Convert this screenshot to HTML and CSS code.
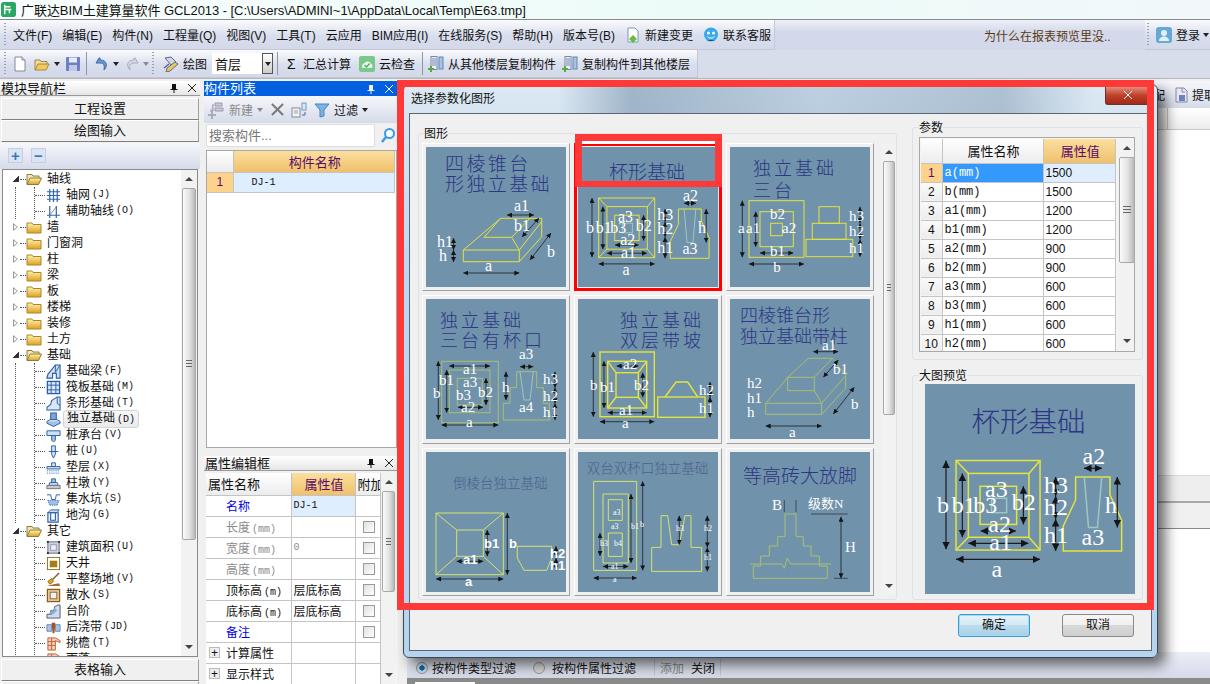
FILE: index.html
```html
<!DOCTYPE html>
<html>
<head>
  <title>广联达BIM土建算量软件 GCL2013</title>
  <link rel="stylesheet" href="styles.css">
</head>
<body>
<svg class="sprite">
  <defs>
    <linearGradient id="fy" x1="0" y1="0" x2="0" y2="1"><stop offset="0" stop-color="#fff3b0"/><stop offset="1" stop-color="#e0a020"/></linearGradient>
    <marker id="ah" viewBox="0 0 6 6" refX="6" refY="3" markerWidth="5" markerHeight="5" orient="auto-start-reverse" markerUnits="userSpaceOnUse"><path d="M0 0L6 3L0 6z" fill="#151515"/></marker>
    <symbol id="i-folder" viewBox="0 0 16 16"><path d="M1 4h5l1 1.500h8V14H1z" fill="url(#fy)" stroke="#a8882c"/></symbol>
    <symbol id="i-folder-open" viewBox="0 0 16 16"><path d="M1 13V3.500h5l1 1.500h6v2" fill="#f8e8a8" stroke="#8a7a40"/><path d="M1 13.500L4 7h11.500l-3 6.500z" fill="url(#fy)" stroke="#8a7a40"/></symbol>
    <symbol id="i-grid" viewBox="0 0 16 16"><path d="M1 4h14M1 8h14M1 12h14M4 1v14M8 1v14M12 1v14" stroke="#2f66b4" stroke-width="1.300" fill="none"/></symbol>
    <symbol id="i-aux" viewBox="0 0 16 16"><path d="M1 12h14M4 2v13M11 2v13" stroke="#2f66b4" stroke-width="1.300" fill="none"/><path d="M4 12L11 3" stroke="#888" fill="none"/></symbol>
    <symbol id="i-beam" viewBox="0 0 16 16"><path d="M1 15l1-4 8-10h5v14h-4v-5H7v5z" fill="#cfe0f4" stroke="#2a5ea8" stroke-width="1.200"/><path d="M10 1v8M15 1l-5 8" stroke="#2a5ea8"/></symbol>
    <symbol id="i-raft" viewBox="0 0 16 16"><rect x="1.500" y="1.500" width="13" height="13" fill="#dbe8f6" stroke="#2a5ea8" stroke-width="1.400"/><path d="M5.500 1.500v13M10.500 1.500v13M1.500 5.500h13M1.500 10.500h13" stroke="#2a5ea8"/></symbol>
    <symbol id="i-strip" viewBox="0 0 16 16"><path d="M1 15v-3l4-3 1-4 6-4h3v14z" fill="#d9e6f5" stroke="#2a5ea8" stroke-width="1.100"/><path d="M12 1v7l3 2" stroke="#2a5ea8" fill="none"/></symbol>
    <symbol id="i-pad" viewBox="0 0 16 16"><path d="M1 10l7-4 7 4-7 5z" fill="#cfe0f4" stroke="#2a5ea8"/><path d="M1 10v2l7 3.500 7-3.500v-2" fill="#9fc0e4" stroke="#2a5ea8"/><rect x="5" y="1" width="6" height="7" fill="#7fa4d0" stroke="#2a5ea8"/></symbol>
    <symbol id="i-cap" viewBox="0 0 16 16"><path d="M1 3h14v5H1z" fill="#cfe0f4" stroke="#2a5ea8"/><path d="M6 8h4v5l-2 2-2-2z" fill="#9fc0e4" stroke="#2a5ea8"/></symbol>
    <symbol id="i-pile" viewBox="0 0 16 16"><path d="M6 2h4v9l-2 4-2-4z" fill="#cfe0f4" stroke="#2a5ea8"/><path d="M3 8h10" stroke="#2a5ea8"/></symbol>
    <symbol id="i-cushion" viewBox="0 0 16 16"><path d="M6 3h4v4H6zM1 7h14v2.500H1z" fill="#d8e4f2" stroke="#2a5ea8"/><path d="M1 11.500h14M1 14h14" stroke="#2a5ea8" stroke-dasharray="1 1"/></symbol>
    <symbol id="i-pier" viewBox="0 0 16 16"><path d="M6 3h4v4H6z" fill="#9fc0e4" stroke="#2a5ea8"/><path d="M4 7h8l1 3H3z" fill="#cfe0f4" stroke="#2a5ea8"/><rect x="1" y="10" width="14" height="3.500" fill="#c8c8c8" stroke="#777"/></symbol>
    <symbol id="i-pit" viewBox="0 0 16 16"><path d="M1 3h4l1 5h4l1-5h4" fill="none" stroke="#2a5ea8"/><path d="M2 9h12l-2 5H4z" fill="#9fc0e4" stroke="#2a5ea8" stroke-dasharray="1 1"/></symbol>
    <symbol id="i-ditch" viewBox="0 0 16 16"><path d="M2 5l3-3h9l-2 3z" fill="#cfe0f4" stroke="#2a5ea8"/><path d="M2 5h11v10H2zM5 5v8h5V5" fill="#e4eef8" stroke="#2a5ea8" stroke-width="1.200"/></symbol>
    <symbol id="i-area" viewBox="0 0 16 16"><rect x="2" y="2" width="12" height="12" fill="#c8d4e4" stroke="#667"/><rect x="5" y="5" width="6" height="6" fill="#eef" stroke="#99a"/><path d="M1 1h2v2H1zM13 1h2v2h-2zM1 13h2v2H1zM13 13h2v2h-2z" fill="#222"/></symbol>
    <symbol id="i-well" viewBox="0 0 16 16"><rect x="1.500" y="1.500" width="13" height="13" fill="#fff" stroke="#8a6a20"/><rect x="4" y="5" width="8" height="7" fill="#a87c10"/></symbol>
    <symbol id="i-level" viewBox="0 0 16 16"><path d="M14 1L7 8" stroke="#8a5a20" stroke-width="1.500"/><path d="M2 10l4-3 2 3-4 3z" fill="#e0a820" stroke="#8a6a10"/><path d="M1 15h14l-1-3-6 1z" fill="#a86838"/></symbol>
    <symbol id="i-apron" viewBox="0 0 16 16"><rect x="1.500" y="1.500" width="13" height="13" fill="#e8c898" stroke="#8a5a20" stroke-width="1.300"/><rect x="4.500" y="4.500" width="7" height="7" fill="#eef2f8" stroke="#8a6a30"/></symbol>
    <symbol id="i-step" viewBox="0 0 16 16"><path d="M1 15v-4h4V7h4V3l4-2h2v14z" fill="#cfdcee" stroke="#556"/><path d="M3 10l6-6 3 3-6 5z" fill="#8aa8d0"/></symbol>
    <symbol id="i-belt" viewBox="0 0 16 16"><path d="M1 5h5v7H1zM10 5h5v7h-5z" fill="#a8c4e4" stroke="#6688b0"/><path d="M6 3h4l-1 11H7z" fill="#a85020"/></symbol>
    <symbol id="i-eave" viewBox="0 0 16 16"><path d="M2 2h8l5 3v2l-5-2v10H2z" fill="#f4d0b8" stroke="#c06030"/><path d="M2 6h8M2 10h8M6 2v13" stroke="#c06030"/></symbol>
    <symbol id="i-doc" viewBox="0 0 16 16"><path d="M3 1h7l3 3v11H3z" fill="#fff" stroke="#889"/><path d="M10 1v3h3" fill="#dde" stroke="#889"/></symbol>
    <symbol id="i-open" viewBox="0 0 16 16"><path d="M1 14V4h5l1 1.500h6V8" fill="#f0dca0" stroke="#a08840"/><path d="M1 14l3-6h11l-3 6z" fill="#f4c860" stroke="#a08840"/></symbol>
    <symbol id="i-save" viewBox="0 0 16 16"><rect x="1" y="1" width="14" height="14" rx="1" fill="#6f7fc4"/><rect x="4" y="1.500" width="8" height="5" fill="#e8ecf8"/><rect x="4" y="9" width="8" height="6" fill="#c0c8e8"/></symbol>
    <symbol id="i-undo" viewBox="0 0 16 16"><path d="M5 2L2 7h4c3 0 5 1 4 7 4-4 3-10-4-10V2z" fill="#6a9ad4" stroke="#3a6aa4"/></symbol>
    <symbol id="i-redo" viewBox="0 0 16 16"><path d="M11 2l3 5h-4c-3 0-5 1-4 7-4-4-3-10 4-10V2z" fill="#d4dae4" stroke="#aab"/></symbol>
    <symbol id="i-draw" viewBox="0 0 16 16"><path d="M2 2l6-1 5 5-4 4z" fill="#cfd8e8" stroke="#667"/><path d="M12 6l3 2-8 7-4 1 1-4z" fill="#e8c860" stroke="#667"/><path d="M1 12l5-4" stroke="#46a" stroke-width="1.500"/></symbol>
    <symbol id="i-cloud" viewBox="0 0 16 16"><rect width="16" height="16" rx="2" fill="#7cc88a"/><path d="M3 10c0-2 2-3 3-3 1-2 5-2 6 1 2 0 2 4 0 4H5c-1 0-2 0-2-2z" fill="#e8f8ea"/><path d="M5.500 9l2 2 3-3.500" stroke="#4aa860" stroke-width="1.300" fill="none"/></symbol>
    <symbol id="i-copy" viewBox="0 0 16 16"><rect x="3" y="0.500" width="6" height="13" fill="#e8eef8" stroke="#78a"/><path d="M4 3h4M4 5h4M4 7h4M4 9h4" stroke="#78a"/><rect x="11" y="1" width="4" height="12" fill="#a8c4e4" stroke="#68a"/><path d="M2 10h2v2h2v2H4v2H2v-2H0v-2h2z" fill="#58a848"/></symbol>
    <symbol id="i-change" viewBox="0 0 16 16"><path d="M3 1h7l3 3v11H3z" fill="#fff" stroke="#79b"/><path d="M8 8l4 4-4 4-4-4z" fill="#6cb840"/></symbol>
    <symbol id="i-smile" viewBox="0 0 16 16"><circle cx="8" cy="7.500" r="7" fill="#3ca8ec"/><circle cx="5.500" cy="6" r="1.500" fill="#fff"/><circle cx="10.500" cy="6" r="1.500" fill="#fff"/><path d="M4.500 9.500c1.500 2 5.500 2 7 0" stroke="#fff" fill="none"/><path d="M4 14l2-1h4l2 1" stroke="#3ca8ec"/></symbol>
    <symbol id="i-user" viewBox="0 0 16 16"><rect width="16" height="16" rx="3" fill="#68a8d4"/><circle cx="8" cy="6" r="3" fill="#e4f0f8"/><path d="M3 14c0-6 10-6 10 0z" fill="#e4f0f8"/></symbol>
    <symbol id="i-pin" viewBox="0 0 10 10"><path d="M3 1h4v5h1.500v1h-3v3h-1V7h-3V6H3z" fill="#111"/></symbol>
    <symbol id="i-close" viewBox="0 0 10 10"><path d="M1 1l8 8M9 1l-8 8" stroke="#222" fill="none"/></symbol>
    <symbol id="i-close-w" viewBox="0 0 10 10"><path d="M1 1l8 8M9 1l-8 8" stroke="#fff" fill="none"/></symbol>
    <symbol id="i-new" viewBox="0 0 18 18"><path d="M7 2h7v3H7zM7 7h8v3H7zM5 3v7H2" fill="#ccd" stroke="#99a"/><path d="M3 10h2v3h3v2H5v3H3v-3H0v-2h3z" fill="#aab"/></symbol>
    <symbol id="i-del" viewBox="0 0 14 14"><path d="M1 1l12 12M13 1L1 13" stroke="#7a7a7a" stroke-width="2.200" fill="none"/></symbol>
    <symbol id="i-dup" viewBox="0 0 16 16"><rect x="1" y="6" width="8" height="9" fill="#f4f4f4" stroke="#889"/><path d="M3 9h4M3 11h4" stroke="#99a"/><rect x="11" y="1" width="4" height="7" fill="#d8e8f8" stroke="#79b"/><path d="M11 13h3v-3" stroke="#46a" fill="none"/></symbol>
    <symbol id="i-filter" viewBox="0 0 16 16"><path d="M1 2h14L10 8v6l-4 1V8z" fill="#7ab4e4" stroke="#4a84b4"/></symbol>
    <symbol id="i-search" viewBox="0 0 16 16"><circle cx="9.500" cy="6.500" r="4.500" fill="#fff" stroke="#3a9ae8" stroke-width="2"/><path d="M6 10l-4 5" stroke="#3a9ae8" stroke-width="2.500"/></symbol>
    <symbol id="i-extract" viewBox="0 0 16 16"><path d="M3 1h8l3 3v11H3z" fill="#e8e8f4" stroke="#889"/><rect x="6" y="8" width="6" height="6" fill="#6f7fc4"/><path d="M9 1v4h3" stroke="#889" fill="none"/></symbol>

    <symbol id="cup" viewBox="0 0 140 140">
      <text class="tt" x="31" y="32" font-size="19">杯形基础</text>
      <g class="ln-y">
        <rect x="20.700" y="51" width="56" height="59.700"/>
        <rect x="28.900" y="59.600" width="40.400" height="42.600"/>
        <rect x="36.700" y="68.200" width="24.400" height="25.400"/>
        <path d="M20.700 51l8.200 8.600M76.700 51l-7.400 8.600M20.700 110.700l8.200-8.500M76.700 110.700l-7.400-8.500"/>
        <path d="M100.400 62h22.900v11.900l7.800 16.800v20.600H92.200V94.700l8.200-17.400z"/>
      </g>
      <g class="ln-p">
        <rect x="44.400" y="76.200" width="10" height="9.600"/>
        <path d="M106.200 62l2.800 33.600h6l2.800-33.600"/>
      </g>
      <g class="dim" marker-start="url(#ah)" marker-end="url(#ah)">
        <path d="M14 51V110.200"/><path d="M24.900 59.600V102.200"/><path d="M65.600 68.200V93.600"/>
        <path d="M20.700 116.900H76.700"/><path d="M28.900 106.200H68.900"/><path d="M37 98H60.700"/>
        <path d="M106 56.200H118"/><path d="M87.100 62V74.700"/><path d="M87.100 74.700V90"/><path d="M87.100 90V111.300"/><path d="M128.200 62V95.600"/>
      </g>
      <g class="lb" font-size="16">
        <text x="8" y="85.800">b</text><text x="17.800" y="85.800">b1</text><text x="32.200" y="85.800">b3</text><text x="57.800" y="84">b2</text>
        <text x="40" y="75">a3</text><text x="42.200" y="98.400">a2</text><text x="42.900" y="110.700">a1</text><text x="44.400" y="128.400">a</text>
        <text x="105" y="53.600">a2</text><text x="79.300" y="72.900">h3</text><text x="79.300" y="87">h2</text><text x="79.300" y="106.200">h1</text>
        <text x="120" y="85.800">h</text><text x="104.400" y="107.300">a3</text>
      </g>
    </symbol>
  </defs>
</svg>

<div class="app">
  <div class="titlebar">
    <svg class="app-logo" viewBox="0 0 16 16"><rect width="16" height="16" rx="3" fill="#28a860"/><path d="M4 3v10M4 5h6M4 8h7M9 8v4" stroke="#fff" stroke-width="1.500" fill="none"/></svg>
    <span>广联达BIM土建算量软件 GCL2013 - [C:\Users\ADMINI~1\AppData\Local\Temp\E63.tmp]</span>
  </div>

  <div class="menubar">
    <div class="bar-seg menu-seg">
      <span class="grip"></span>
      <span>文件(F)</span><span>编辑(E)</span><span>构件(N)</span><span>工程量(Q)</span><span>视图(V)</span><span>工具(T)</span><span>云应用</span><span>BIM应用(I)</span><span>在线服务(S)</span><span>帮助(H)</span><span>版本号(B)</span>
      <span class="tool"><svg class="ic"><use href="#i-change"/></svg>新建变更</span>
      <span class="tool"><svg class="ic"><use href="#i-smile"/></svg>联系客服</span>
    </div>
    <div class="news">为什么在报表预览里没..</div>
    <div class="bar-seg login-seg">
      <span class="grip"></span>
      <span class="tool"><svg class="ic"><use href="#i-user"/></svg>登录</span><span class="caret"></span>
    </div>
  </div>

  <div class="toolbar">
    <div class="bar-seg tool-seg">
      <span class="grip"></span>
      <svg class="ic ml-6"><use href="#i-doc"/></svg>
      <svg class="ic ml-6"><use href="#i-open"/></svg><span class="caret"></span>
      <svg class="ic ml-5"><use href="#i-save"/></svg>
      <span class="sep ml-5"></span>
      <svg class="ic ml-7"><use href="#i-undo"/></svg><span class="caret ml-3"></span>
      <svg class="ic ml-5"><use href="#i-redo"/></svg><span class="caret ml-3 faded"></span>
      <span class="grip ml-3"></span>
      <span class="tool ml-9"><svg class="ic"><use href="#i-draw"/></svg>绘图</span>
      <span class="floor"><span>首层</span><b class="floor-btn"><i class="caret"></i></b></span>
      <span class="sep ml-4"></span>
      <span class="tool sigma ml-9"><b>Σ</b>汇总计算</span>
      <span class="tool ml-8"><svg class="ic"><use href="#i-cloud"/></svg>云检查</span>
      <span class="sep ml-7"></span>
      <span class="tool ml-5"><svg class="ic"><use href="#i-copy"/></svg>从其他楼层复制构件</span>
      <span class="tool ml-6"><svg class="ic"><use href="#i-copy"/></svg>复制构件到其他楼层</span>
    </div>
  </div>

  <div class="main">
    <div class="nav">
      <div class="pane-head"><span>模块导航栏</span><svg class="pin"><use href="#i-pin"/></svg><svg class="x"><use href="#i-close"/></svg></div>
      <div class="nav-btn first">工程设置</div>
      <div class="nav-btn">绘图输入</div>
      <div class="expander"><span class="ex-btn">+</span><span class="ex-btn">−</span></div>
      <div class="tree-box">
        <div class="tree">
          <div class="tree-row"><i class="exp open"></i><svg class="folder"><use href="#i-folder-open"/></svg>轴线</div>
          <div class="kids">
            <div class="tree-row kid"><svg class="ti"><use href="#i-grid"/></svg>轴网<span class="key">(J)</span></div>
            <div class="tree-row kid"><svg class="ti"><use href="#i-aux"/></svg>辅助轴线<span class="key">(O)</span></div>
          </div>
          <div class="tree-row"><i class="exp"></i><svg class="folder"><use href="#i-folder"/></svg>墙</div>
          <div class="tree-row"><i class="exp"></i><svg class="folder"><use href="#i-folder"/></svg>门窗洞</div>
          <div class="tree-row"><i class="exp"></i><svg class="folder"><use href="#i-folder"/></svg>柱</div>
          <div class="tree-row"><i class="exp"></i><svg class="folder"><use href="#i-folder"/></svg>梁</div>
          <div class="tree-row"><i class="exp"></i><svg class="folder"><use href="#i-folder"/></svg>板</div>
          <div class="tree-row"><i class="exp"></i><svg class="folder"><use href="#i-folder"/></svg>楼梯</div>
          <div class="tree-row"><i class="exp"></i><svg class="folder"><use href="#i-folder"/></svg>装修</div>
          <div class="tree-row"><i class="exp"></i><svg class="folder"><use href="#i-folder"/></svg>土方</div>
          <div class="tree-row"><i class="exp open"></i><svg class="folder"><use href="#i-folder-open"/></svg>基础</div>
          <div class="kids">
            <div class="tree-row kid"><svg class="ti"><use href="#i-beam"/></svg>基础梁<span class="key">(F)</span></div>
            <div class="tree-row kid"><svg class="ti"><use href="#i-raft"/></svg>筏板基础<span class="key">(M)</span></div>
            <div class="tree-row kid"><svg class="ti"><use href="#i-strip"/></svg>条形基础<span class="key">(T)</span></div>
            <div class="tree-row kid current"><svg class="ti"><use href="#i-pad"/></svg><em>独立基础<span class="key">(D)</span></em></div>
            <div class="tree-row kid"><svg class="ti"><use href="#i-cap"/></svg>桩承台<span class="key">(V)</span></div>
            <div class="tree-row kid"><svg class="ti"><use href="#i-pile"/></svg>桩<span class="key">(U)</span></div>
            <div class="tree-row kid"><svg class="ti"><use href="#i-cushion"/></svg>垫层<span class="key">(X)</span></div>
            <div class="tree-row kid"><svg class="ti"><use href="#i-pier"/></svg>柱墩<span class="key">(Y)</span></div>
            <div class="tree-row kid"><svg class="ti"><use href="#i-pit"/></svg>集水坑<span class="key">(S)</span></div>
            <div class="tree-row kid"><svg class="ti"><use href="#i-ditch"/></svg>地沟<span class="key">(G)</span></div>
          </div>
          <div class="tree-row"><i class="exp open"></i><svg class="folder"><use href="#i-folder-open"/></svg>其它</div>
          <div class="kids">
            <div class="tree-row kid"><svg class="ti"><use href="#i-area"/></svg>建筑面积<span class="key">(U)</span></div>
            <div class="tree-row kid"><svg class="ti"><use href="#i-well"/></svg>天井</div>
            <div class="tree-row kid"><svg class="ti"><use href="#i-level"/></svg>平整场地<span class="key">(V)</span></div>
            <div class="tree-row kid"><svg class="ti"><use href="#i-apron"/></svg>散水<span class="key">(S)</span></div>
            <div class="tree-row kid"><svg class="ti"><use href="#i-step"/></svg>台阶</div>
            <div class="tree-row kid"><svg class="ti"><use href="#i-belt"/></svg>后浇带<span class="key">(JD)</span></div>
            <div class="tree-row kid"><svg class="ti"><use href="#i-eave"/></svg>挑檐<span class="key">(T)</span></div>
            <div class="tree-row kid"><svg class="ti"><use href="#i-eave"/></svg>雨蓬</div>
          </div>
        </div>
        <div class="sb sb-tree"><i class="up"></i><div class="thumb"></div><i class="down"></i></div>
      </div>
      <div class="nav-btn foot">表格输入</div>
      <div class="nav-btn"></div>
    </div>

    <div class="list">
      <div class="pane-head active"><span>构件列表</span><svg class="pin"><use href="#i-pin"/></svg><svg class="x"><use href="#i-close-w"/></svg></div>
      <div class="list-tools">
        <svg class="new"><use href="#i-new"/></svg><span class="dim-text">新建</span><span class="caret faded"></span>
        <svg class="del"><use href="#i-del"/></svg>
        <svg class="ic"><use href="#i-dup"/></svg>
        <svg class="ic"><use href="#i-filter"/></svg><span>过滤</span><span class="caret"></span>
      </div>
      <div class="search"><span class="search-box">搜索构件...</span><svg class="ic"><use href="#i-search"/></svg></div>
      <div class="list-grid">
        <table class="grid">
          <tr><th class="rh"></th><th class="hot">构件名称</th></tr>
          <tr><td class="rh hot-rh">1</td><td class="val mono indent">DJ-1</td></tr>
        </table>
      </div>
      <div class="pane-head"><span>属性编辑框</span><svg class="pin"><use href="#i-pin"/></svg><svg class="x"><use href="#i-close"/></svg></div>
      <div class="prop-box">
        <table class="grid prop">
          <tr><th class="plain">属性名称</th><th class="hot">属性值</th><th class="plain">附加</th></tr>
          <tr><td class="blue pi">名称</td><td class="val mono">DJ-1</td><td></td></tr>
          <tr><td class="gray pi">长度<span class="key">(mm)</span></td><td></td><td><i class="chk"></i></td></tr>
          <tr><td class="gray pi">宽度<span class="key">(mm)</span></td><td class="gray mono">0</td><td><i class="chk"></i></td></tr>
          <tr><td class="gray pi">高度<span class="key">(mm)</span></td><td></td><td><i class="chk"></i></td></tr>
          <tr><td class="pi">顶标高<span class="key">(m)</span></td><td>层底标高</td><td><i class="chk"></i></td></tr>
          <tr><td class="pi">底标高<span class="key">(m)</span></td><td>层底标高</td><td><i class="chk"></i></td></tr>
          <tr><td class="blue pi">备注</td><td></td><td><i class="chk"></i></td></tr>
          <tr><td class="pi"><i class="plus">+</i>计算属性</td><td></td><td></td></tr>
          <tr><td class="pi"><i class="plus">+</i>显示样式</td><td></td><td></td></tr>
        </table>
        <div class="sb sb-prop"><i class="up"></i><div class="thumb"></div><i class="down"></i></div>
      </div>
    </div>

    <div class="work">
      <div class="work-tools"><span>配</span><svg class="ic"><use href="#i-extract"/></svg><span>提取</span></div>
      <div class="work-head"><span class="work-cell"></span></div>
      <div class="work-blank"></div>
      <div class="work-band"></div>
      <div class="work-band light"></div>
      <div class="work-blank short"></div>
      <div class="filter-bar">
        <span class="filter-seg">
          <i class="radio on"></i><span>按构件类型过滤</span>
          <i class="radio second"></i><span>按构件属性过滤</span>
        </span>
        <span class="filter-seg"><span class="dim-text">添加</span><span>关闭</span></span>
      </div>
      <div class="tabs"><span class="tab"></span></div>
    </div>
  </div>

  <div class="dialog">
    <div class="dlg-title"><span>选择参数化图形</span><span class="dlg-close"><svg><use href="#i-close-w"/></svg></span></div>
    <div class="dlg-client">
      <div class="dlg-body">
        <div class="group g-shapes">
          <div class="legend">图形</div>
          <div class="shapes">
            <div class="cells">
              <div class="cell">
                <svg class="thumb-img" viewBox="0 0 140 140">
                  <g class="tt" font-size="19" letter-spacing="2.400"><text x="19" y="24">四棱锥台</text><text x="19" y="44">形独立基础</text></g>
                  <path class="ln-y" d="M37.300 103H93.300V114.700H37.300zM37.300 103L74.700 71.300H115.700V89.700L93.300 114.700M93.300 103L115.700 74.700M58 90.300H85.700M58 90.300L74.700 71.300M85.700 90.300L104 71.300M85.700 90.300L93.300 103"/>
                  <g class="dim" marker-start="url(#ah)" marker-end="url(#ah)">
                    <path d="M81 68H108"/><path d="M113 71L96 90"/><path d="M125 86L104 113"/><path d="M37.300 126H93.300"/><path d="M27.500 91V103"/><path d="M27.500 103V115"/>
                  </g>
                  <g class="lb" font-size="16"><text x="88" y="64">a1</text><text x="88" y="84">b1</text><text x="121" y="110">b</text><text x="59" y="124">a</text><text x="11" y="100">h1</text><text x="13" y="114">h</text></g>
                </svg>
              </div>
              <div class="cell selected"><svg class="thumb-img" viewBox="0 0 140 140"><use href="#cup"/></svg></div>
              <div class="cell">
                <svg class="thumb-img" viewBox="0 0 140 140">
                  <g class="tt" font-size="18" letter-spacing="3"><text x="23" y="28">独立基础</text><text x="23" y="50">三台</text></g>
                  <g class="ln-y">
                    <rect x="19" y="53.700" width="55" height="56.600"/><rect x="30" y="64.700" width="33.300" height="35"/><rect x="40.700" y="76.300" width="11.600" height="12.400"/>
                    <rect x="76" y="92.300" width="46.700" height="17.400"/><rect x="82.300" y="76.300" width="33.700" height="16"/><rect x="89" y="59.700" width="20.300" height="16.600"/>
                  </g>
                  <g class="dim" marker-start="url(#ah)" marker-end="url(#ah)">
                    <path d="M12.300 53.700V110.300"/><path d="M25.700 64.700V99.700"/><path d="M19 117H74"/><path d="M30 106H63.300"/><path d="M130 59.700V76.300"/><path d="M130 76.300V92.300"/><path d="M130 92.300V109.700"/>
                  </g>
                  <g class="lb" font-size="15"><text x="8" y="86">a</text><text x="16" y="86">a1</text><text x="40" y="72.300">b2</text><text x="52" y="86.300">a2</text><text x="40" y="108.700">b1</text><text x="43.300" y="125.300">b</text><text x="119" y="73.700">h3</text><text x="119" y="89">h2</text><text x="119" y="106">h1</text></g>
                </svg>
              </div>
              <div class="cell">
                <svg class="thumb-img" viewBox="0 0 140 140">
                  <g class="tt" font-size="18" letter-spacing="3"><text x="14" y="28">独立基础</text><text x="14" y="48">三台有杯口</text></g>
                  <g class="ln-g">
                    <rect x="15.700" y="62.300" width="56.600" height="61.400"/><rect x="23.300" y="71" width="40.700" height="42.700"/><rect x="31.300" y="79.300" width="25" height="26.700"/>
                    <path d="M90.700 72.700H110.700V88.700H117.300V104.300H123.300V121H77.300V104.300H84V88.700H90.700z"/>
                  </g>
                  <path class="ln-p" d="M94 72.700L98 101H104L107.300 72.700"/>
                  <g class="dim" marker-start="url(#ah)" marker-end="url(#ah)">
                    <path d="M12.300 62.300V121"/><path d="M20.700 71V113.700"/><path d="M60 79.300V106"/><path d="M15.700 126H72.300"/><path d="M23.300 67H64"/><path d="M32 108.300H57"/><path d="M94 67.700H107.300"/><path d="M80 72.700V101"/><path d="M129 72.700V88.700"/><path d="M129 88.700V104.300"/><path d="M129 104.300V121"/>
                  </g>
                  <g class="lb" font-size="15"><text x="7" y="99">b</text><text x="13" y="86">b1</text><text x="37" y="75">a1</text><text x="37" y="88">a3</text><text x="30" y="101">b3</text><text x="52" y="98">b2</text><text x="35" y="113">a2</text><text x="40" y="128">a</text><text x="93" y="60">a3</text><text x="76" y="93">h</text><text x="93" y="113">a4</text><text x="117" y="85">h3</text><text x="117" y="102">h2</text><text x="117" y="118">h1</text></g>
                </svg>
              </div>
              <div class="cell">
                <svg class="thumb-img" viewBox="0 0 140 140">
                  <g class="tt" font-size="18" letter-spacing="3"><text x="42" y="28">独立基础</text><text x="42" y="48">双层带坡</text></g>
                  <g class="ln-y thick">
                    <rect x="22" y="53" width="54.300" height="64.700"/><rect x="29.700" y="62.300" width="39" height="46.700"/><rect x="38" y="73.700" width="22.300" height="24.600"/>
                    <path d="M29.700 62.300L38 73.700M68.700 62.300L60.300 73.700M29.700 109L38 98.300M68.700 109L60.300 98.300"/>
                    <rect x="79.700" y="98" width="47.300" height="20.300"/><path d="M87 98L98 83H109.700L119.700 98"/>
                  </g>
                  <g class="dim" marker-start="url(#ah)" marker-end="url(#ah)">
                    <path d="M15.300 53V117.700"/><path d="M26 62.300V109"/><path d="M64.700 73.700V98.300"/><path d="M22 122.700H76.300"/><path d="M29.700 113.700H68.700"/><path d="M38.700 67H60.300"/><path d="M132 83V98"/><path d="M132 98V118.300"/>
                  </g>
                  <g class="lb" font-size="15"><text x="12" y="91">b</text><text x="22" y="93">b1</text><text x="45" y="70">a2</text><text x="56" y="91">b2</text><text x="41" y="116">a1</text><text x="44" y="129">a</text><text x="121" y="96">h2</text><text x="121" y="114">h1</text></g>
                </svg>
              </div>
              <div class="cell">
                <svg class="thumb-img" viewBox="0 0 140 140">
                  <g class="tt" font-size="18"><text x="10" y="23">四棱锥台形</text><text x="10" y="44">独立基础带柱</text></g>
                  <path class="ln-g" d="M35.700 104.300H91.700V115.300H35.700zM35.700 104.300L57.700 78.300M78.300 59.300H102.300L115.700 76.700V89.300L91.700 115.300M91.700 104.300L115.700 76.700M57.700 78.300H84.300V91.700H57.700zM57.700 78.300L78.300 59.300M84.300 78.300L102.300 59.300M84.300 91.700L91.700 104.300"/>
                  <g class="dim" marker-start="url(#ah)" marker-end="url(#ah)">
                    <path d="M83.300 52.700H108.300"/><path d="M108.300 61L93.300 78.300"/><path d="M124.300 88.300L103.300 115"/><path d="M35.700 127H91.700"/>
                  </g>
                  <g class="lb" font-size="15"><text x="92" y="51">a1</text><text x="103" y="75">b1</text><text x="17" y="89">h2</text><text x="17" y="104">h1</text><text x="17" y="118">h</text><text x="121" y="110">b</text><text x="59" y="138">a</text></g>
                </svg>
              </div>
              <div class="cell">
                <svg class="thumb-img" viewBox="0 0 140 140">
                  <text class="tt soft" x="27" y="36" font-size="13.500">倒棱台独立基础</text>
                  <path class="ln-p2" d="M10 61H77.300V122.700H10zM30.700 78H57.300V104.300H30.700zM10 61L30.700 78M77.300 61L57.300 78M10 122.700L30.700 104.300M77.300 122.700L57.300 104.300M91.300 94.300H125.700V106L120.700 118.300H98L91.300 106z"/>
                  <g class="dim" marker-start="url(#ah)" marker-end="url(#ah)">
                    <path d="M81.300 61V122.700"/><path d="M61.300 78V104.300"/><path d="M30.700 109.300H57.300"/><path d="M10 127H77.300"/><path d="M130 94.300V106"/><path d="M130 106V118.300"/>
                  </g>
                  <g class="lb sans" font-size="13"><text x="83" y="96">b</text><text x="58" y="96">b1</text><text x="37" y="112">a1</text><text x="39" y="134">a</text><text x="124" y="106">h2</text><text x="124" y="118">h1</text></g>
                </svg>
              </div>
              <div class="cell">
                <svg class="thumb-img" viewBox="0 0 140 140">
                  <text class="tt soft" x="8.700" y="21" font-size="13.500">双台双杯口独立基础</text>
                  <path class="ln-p2" d="M15.700 29.400H58.700V118.400H15.700zM25 42H50.300V111H25zM30.300 47.700H44.300V68.400H30.300zM30.300 81H44.300V104.400H30.300zM73.700 95.400H83V63.700H89.700L93.700 92.700H101.300L107 63.700H113V95.400H123.700V119.400H73.700z"/>
                  <g class="dim" marker-start="url(#ah)" marker-end="url(#ah)">
                    <path d="M64.700 29.400V118.400"/><path d="M15.700 126H58.700"/><path d="M53 42V111"/><path d="M25 114.500H50.300"/><path d="M129.300 63.700V95.400"/><path d="M129.300 95.400V119.400"/><path d="M101.300 63.700V92.700"/><path d="M22 81V104"/>
                  </g>
                  <g class="lb" font-size="8"><text x="62" y="75">b</text><text x="53" y="77">b1</text><text x="33" y="77">a3</text><text x="33" y="117">a1</text><text x="35" y="130">a</text><text x="22" y="94">b3</text><text x="36" y="94">b4</text><text x="35" y="63">a3</text><text x="98" y="79">h3</text><text x="126" y="79">h2</text><text x="126" y="108">h1</text></g>
                </svg>
              </div>
              <div class="cell">
                <svg class="thumb-img" viewBox="0 0 140 140">
                  <text class="tt" x="13" y="31" font-size="19">等高砖大放脚</text>
                  <path class="ln-g" d="M55 62H66V84.700H73.300V94H81V104H89.300V114H97.300V126.300H23.300V114H30.700V104H39.300V94H47.700V84.700H55zM20 112H51.700L54.300 116.300L57.300 106L60.700 112H101"/>
                  <path class="hair" d="M81 62H117.700M104 126.300H117.700M54.300 48V60M66 48V60"/>
                  <g class="dim" marker-start="url(#ah)" marker-end="url(#ah)"><path d="M111 64.700V126.300"/></g>
                  <g class="lb" font-size="15"><text x="42" y="58">B</text><text x="115" y="100">H</text></g>
                  <text class="lb cjk" x="78" y="56" font-size="13">级数N</text>
                </svg>
              </div>
            </div>
            <div class="sb sb-shapes"><i class="up"></i><div class="thumb"></div><i class="down"></i></div>
          </div>
        </div>

        <div class="dlg-side">
          <div class="group g-params">
            <div class="legend">参数</div>
            <div class="param-box">
              <table class="grid param">
                <tr><th class="rh"></th><th class="plain">属性名称</th><th class="hot">属性值</th></tr>
                <tr><td class="rh hot-rh">1</td><td class="sel mono">a(mm)</td><td class="val">1500</td></tr>
                <tr><td class="rh">2</td><td class="mono">b(mm)</td><td>1500</td></tr>
                <tr><td class="rh">3</td><td class="mono">a1(mm)</td><td>1200</td></tr>
                <tr><td class="rh">4</td><td class="mono">b1(mm)</td><td>1200</td></tr>
                <tr><td class="rh">5</td><td class="mono">a2(mm)</td><td>900</td></tr>
                <tr><td class="rh">6</td><td class="mono">b2(mm)</td><td>900</td></tr>
                <tr><td class="rh">7</td><td class="mono">a3(mm)</td><td>600</td></tr>
                <tr><td class="rh">8</td><td class="mono">b3(mm)</td><td>600</td></tr>
                <tr><td class="rh">9</td><td class="mono">h1(mm)</td><td>600</td></tr>
                <tr><td class="rh">10</td><td class="mono">h2(mm)</td><td>600</td></tr>
              </table>
              <div class="sb sb-param"><i class="up"></i><div class="thumb"></div><i class="down"></i></div>
            </div>
          </div>
          <div class="group g-preview">
            <div class="legend">大图预览</div>
            <svg class="preview-img" viewBox="0 0 140 140"><use href="#cup"/></svg>
          </div>
        </div>
      </div>
      <div class="dlg-foot">
        <span class="btn default">确定</span>
        <span class="btn">取消</span>
      </div>
    </div>
  </div>

  <div class="mark mark-dialog"></div>
  <div class="mark mark-title"></div>
</div>
</body>
</html>
```

FILE: styles.css
```css
* {
  box-sizing: border-box;
}
html, body {
  margin: 0;
  height: 100%;
  overflow: hidden;
}
body {
  font-family: "Liberation Sans", "Noto Sans CJK SC", sans-serif;
  font-size: 12px;
  color: #111;
}
.sprite {
  display: block;
  width: 0;
  height: 0;
}
.app {
  position: relative;
  width: 1210px;
  height: 684px;
  display: flex;
  flex-direction: column;
  background: #f0f0f0;
  overflow: hidden;
}
.ml-3 { margin-left: 3px; }
.ml-4 { margin-left: 4px; }
.ml-5 { margin-left: 5px; }
.ml-6 { margin-left: 6px; }
.ml-7 { margin-left: 7px; }
.ml-8 { margin-left: 8px; }
.ml-9 { margin-left: 9px; }

/* title and bars */
.titlebar {
  height: 20px;
  display: flex;
  align-items: center;
  gap: 5px;
  padding-left: 1px;
  font-size: 13px;
  letter-spacing: -0.06px;
  white-space: nowrap;
  background: linear-gradient(90deg, #f8fefd, #ecfbf8 60%, #f2f8fa);
  border-bottom: 1px solid #8a8a8a;
  flex: none;
}
.app-logo {
  width: 15px;
  height: 15px;
}
.menubar {
  height: 30px;
  flex: none;
  display: flex;
  align-items: center;
  background: linear-gradient(#eef0f8, #d3d9ea 40%);
}
.toolbar {
  height: 29px;
  flex: none;
  display: flex;
  background: #d8ddec;
  border-bottom: 1px solid #b8b8b8;
}
.bar-seg {
  display: flex;
  align-items: center;
  height: 100%;
  background: linear-gradient(#fbfbfd, #d9deed 55%, #d3d9ea);
  border-right: 1px solid #c4c8d4;
  border-bottom: 1px solid #c4c8d4;
}
.bar-seg > span {
  white-space: nowrap;
  flex: none;
}
.menu-seg {
  width: 775px;
  gap: 10px;
  padding-left: 4px;
}
.menu-seg .grip {
  margin-right: -3px;
}
.news {
  margin-left: 209px;
  width: 160px;
  color: #5b3a12;
}
.login-seg {
  margin-left: auto;
  width: 65px;
  padding-left: 2px;
  border-right: none;
}
.login-seg .tool {
  margin-left: 7px;
}
.login-seg .caret {
  margin-left: 3px;
}
.tool-seg {
  width: 698px;
  padding-left: 4px;
}
.grip {
  width: 2px;
  height: 24px;
  flex: none;
  background: repeating-linear-gradient(#9aa2b8 0 1px, transparent 1px 3px);
}
.tool {
  display: inline-flex;
  align-items: center;
  gap: 4px;
  white-space: nowrap;
}
.ic {
  width: 16px;
  height: 16px;
  flex: none;
}
.caret {
  display: inline-block;
  width: 0;
  height: 0;
  margin-left: 4px;
  border-left: 3px solid transparent;
  border-right: 3px solid transparent;
  border-top: 4px solid #222;
  flex: none;
}
.caret.ml-3 {
  margin-left: 3px;
}
.caret.faded {
  border-top-color: #8a8a8a;
}
.sep {
  width: 1px;
  height: 23px;
  background: #8f96a8;
  flex: none;
}
.floor {
  display: flex;
  align-items: center;
  justify-content: space-between;
  width: 61px;
  height: 21px;
  margin-left: 5px;
  padding-left: 3px;
  font-size: 13px;
  background: #fff;
}
.floor-btn {
  display: flex;
  align-items: center;
  justify-content: center;
  width: 11px;
  height: 21px;
  border: 1px solid #555;
  background: linear-gradient(#fff, #ccc);
}
.floor-btn .caret {
  margin: 0;
}
.sigma {
  gap: 6px;
}
.sigma b {
  font-weight: normal;
  font-size: 14px;
  width: 10px;
}

/* main area */
.main {
  flex: 1;
  display: flex;
  min-height: 0;
}
.nav {
  width: 200px;
  padding-top: 2px;
  display: flex;
  flex-direction: column;
  flex: none;
  overflow: hidden;
}
.pane-head {
  display: flex;
  align-items: center;
  height: 15px;
  font-size: 13px;
  line-height: 15px;
  background: linear-gradient(#fff, #e6e6e6);
  border-bottom: 1px solid #9a9a9a;
  flex: none;
  padding-left: 1px;
}
.pane-head span {
  flex: 1;
  overflow: hidden;
}
.pane-head.active {
  background: #0060e0;
  color: #fff;
  border: none;
  padding-left: 0;
}
.pane-head.active .pin {
  filter: invert(1);
}
.pin, .x {
  width: 10px;
  height: 10px;
}
.pin {
  margin-right: 8px;
}
.x {
  margin-right: 3px;
}
.nav-btn {
  height: 22px;
  margin: 0 1px;
  text-align: center;
  font-size: 13px;
  line-height: 20px;
  background: #f0f0f0;
  border: 1px solid #fff;
  border-right-color: #a0a0a0;
  border-bottom-color: #808080;
  flex: none;
}
.nav-btn.first {
  margin-top: 2px;
}
.nav-btn.foot {
  margin-top: 2px;
}
.expander {
  height: 26px;
  margin-top: 1px;
  padding: 5px 0 0 8px;
  display: flex;
  gap: 8px;
  background: linear-gradient(#f6f7fb, #d6dbea);
  flex: none;
}
.ex-btn {
  width: 15px;
  height: 15px;
  text-align: center;
  font: bold 15px/14px "Liberation Sans", sans-serif;
  color: #3a78b8;
  background: #dbe4f2;
  border: 1px solid #c4cfe2;
}
.tree-box {
  height: 488px;
  flex: none;
  margin: 0 2px;
  display: flex;
  background: #fff;
  border: 1px solid #8a8a8a;
  overflow: hidden;
}
.tree {
  flex: 1;
  min-width: 0;
  padding-top: 1px;
  overflow: hidden;
}
.tree-row {
  position: relative;
  display: flex;
  align-items: center;
  height: 16px;
  padding-left: 10px;
  white-space: nowrap;
  line-height: 16px;
}
.tree-row:not(.kid)::before {
  content: "";
  position: absolute;
  left: 17px;
  top: 8px;
  width: 6px;
  border-top: 1px dotted #555;
}
.exp {
  position: relative;
  width: 6px;
  height: 8px;
  flex: none;
  border-left: 5px solid #999;
  border-top: 4px solid transparent;
  border-bottom: 4px solid transparent;
  margin-right: 7px;
}
.exp::after {
  content: "";
  position: absolute;
  left: -4px;
  top: -2px;
  border-left: 3px solid #fff;
  border-top: 2px solid transparent;
  border-bottom: 2px solid transparent;
}
.exp.open {
  width: 6px;
  height: 6px;
  border: none;
  background: linear-gradient(135deg, transparent 50%, #333 50%);
  margin-right: 7px;
}
.exp.open::after {
  display: none;
}
.folder {
  width: 16px;
  height: 16px;
  margin-right: 5px;
  flex: none;
}
.kids {
  position: relative;
  margin-left: 31px;
  border-left: 1px dotted #555;
}
.kids::before {
  content: "";
  position: absolute;
  left: -20px;
  top: 0;
  bottom: 0;
  border-left: 1px dotted #555;
}
.tree-row.kid {
  padding-left: 11px;
}
.kid::before {
  content: "";
  position: absolute;
  left: 0;
  top: 8px;
  width: 10px;
  border-top: 1px dotted #555;
}
.ti {
  width: 15px;
  height: 15px;
  margin-right: 5px;
  flex: none;
}
.key, .mono {
  font-family: "Liberation Mono", monospace;
  font-size: 10px;
}
.key {
  margin-left: 2px;
}
.current em {
  font-style: normal;
  padding: 0 3px;
  margin-left: -3px;
  background: linear-gradient(#f8f8f8, #eaeaea);
  border: 1px solid #d4d4d4;
  border-radius: 3px;
  line-height: 14px;
}

/* scrollbars */
.sb {
  display: flex;
  flex-direction: column;
  flex: none;
  align-items: center;
  background: #f2f2f2;
}
.sb .up, .sb .down {
  width: 0;
  height: 0;
  margin: 7px 0;
  border-left: 4px solid transparent;
  border-right: 4px solid transparent;
  flex: none;
}
.sb .up {
  border-bottom: 4px solid #444;
}
.sb .down {
  margin-top: auto;
  border-top: 4px solid #444;
}
.sb .thumb {
  position: relative;
  width: calc(100% - 2px);
  background: linear-gradient(90deg, #fafafa, #e2e2e2 55%, #b8b8b8);
  border: 1px solid #a8a8a8;
  border-radius: 2px;
}
.sb .thumb::after {
  content: "";
  position: absolute;
  left: 3px;
  right: 3px;
  top: calc(50% - 4px);
  height: 8px;
  background: repeating-linear-gradient(#666 0 1px, transparent 1px 3px);
}
.sb-tree {
  width: 16px;
  margin: 0 0 0 auto;
}
.sb-tree .thumb {
  height: 352px;
}
.sb-prop {
  width: 15px;
}
.sb-prop .thumb {
  height: 101px;
}
.sb-shapes {
  width: 14px;
  height: 452px;
  margin-left: 8px;
}
.sb-shapes .thumb {
  height: 254px;
}
.sb-param {
  width: 18px;
  margin-left: 2px;
}
.sb-param .thumb {
  height: 106px;
}

/* list pane */
.list {
  width: 193px;
  margin: 2px 0 0 4px;
  display: flex;
  flex-direction: column;
  flex: none;
}
.list-tools {
  height: 27px;
  display: flex;
  align-items: center;
  flex: none;
  padding-left: 4px;
  background: linear-gradient(#f6f7fb, #d6dbea);
}
.new {
  width: 18px;
  height: 18px;
  margin-right: 3px;
}
.del {
  width: 13px;
  height: 13px;
  margin: 0 7px 0 8px;
}
.list-tools .ic {
  margin-right: 7px;
}
.list-tools .ic + span {
  margin-left: -3px;
}
.dim-text {
  color: #8a8a8a;
}
.search {
  display: flex;
  align-items: center;
  gap: 5px;
  height: 24px;
  margin-left: 2px;
  flex: none;
}
.search-box {
  width: 169px;
  height: 23px;
  padding-left: 2px;
  line-height: 21px;
  font-size: 13px;
  color: #777;
  background: #fff;
  border: 1px solid #ddd;
  border-radius: 2px;
}
.list-grid {
  height: 298px;
  margin: 3px 0 8px 2px;
  flex: none;
  background: #fff;
  border: 1px solid #a8a8a8;
}
.prop-box {
  display: flex;
  flex: 1;
  min-height: 0;
  margin: 2px 0 0 2px;
  overflow: hidden;
  background: #f6f6f6;
}

/* tables */
.grid {
  border-collapse: collapse;
  table-layout: fixed;
}
.grid th, .grid td {
  padding: 0 0 0 2px;
  border: 1px solid #c4c4c4;
  border-top: none;
  border-left: none;
  font-weight: normal;
  white-space: nowrap;
  overflow: hidden;
}
.grid th {
  font-size: 13px;
  text-align: center;
  background: linear-gradient(#fff, #ececec);
}
.grid th.hot {
  color: #5a0a6a;
  background: linear-gradient(#fbdf9e, #efc06c);
}
.rh {
  text-align: center;
  background: #f0f0f0;
}
.grid td.rh {
  padding: 0;
  background: linear-gradient(#fafafa, #ececec);
  text-align: center;
}
.grid td.hot-rh {
  color: #5a0a6a;
  background: #fdd28a;
}
.grid td.val {
  background: #deeefe;
}
.grid td.sel {
  color: #fff;
  background: #3399ff;
}
.list-grid .grid {
  width: 188px;
}
.list-grid th {
  height: 21px;
}
.list-grid td {
  height: 20px;
}
.list-grid .rh {
  width: 26px;
}
.indent {
  padding-left: 18px !important;
}
.prop {
  width: 175px;
  background: #fff;
  flex: none;
}
.prop th {
  height: 22px;
}
.prop td {
  height: 21px;
}
.prop th:nth-child(1), .prop td:nth-child(1) {
  width: 85px;
}
.prop th:nth-child(2), .prop td:nth-child(2) {
  width: 64px;
}
.prop th.plain {
  text-align: left;
}
.prop td.pi {
  padding-left: 20px;
  position: relative;
}
.blue {
  color: #0000e0;
}
.gray {
  color: #8a8a8a;
}
.chk {
  display: block;
  width: 12px;
  height: 12px;
  margin: 0 auto;
  background: linear-gradient(135deg, #e0e0e0, #fff);
  border: 1px solid #9a9a9a;
}
.plus {
  position: absolute;
  left: 3px;
  top: 4px;
  width: 11px;
  height: 11px;
  font: 12px/10px "Liberation Sans", sans-serif;
  text-align: center;
  background: #eee;
  border: 1px solid #bbb;
}
.param {
  width: 195px;
  flex: none;
  background: #fff;
}
.param th {
  height: 24px;
}
.param td {
  height: 19px;
  font-size: 12px;
}
.param .rh {
  width: 21px;
}
.param th:nth-child(2), .param td:nth-child(2) {
  width: 101px;
}

/* work area behind the dialog */
.work {
  flex: 1;
  min-width: 0;
  margin: 2px 0 0 10px;
  display: flex;
  flex-direction: column;
}
.work-tools {
  height: 27px;
  flex: none;
  display: flex;
  align-items: center;
  gap: 8px;
  padding-left: 746px;
  overflow: hidden;
  white-space: nowrap;
  background: linear-gradient(#f6f7fb, #d6dbea);
}
.work-tools span:last-child {
  margin-left: -5px;
  flex: none;
}
.work-head {
  height: 22px;
  flex: none;
  display: flex;
  justify-content: flex-end;
  background: linear-gradient(#fff, #ececec);
  border-bottom: 1px solid #c8c8c8;
}
.work-cell {
  width: 43px;
  border-left: 1px solid #c8c8c8;
}
.work-blank {
  height: 345px;
  flex: none;
  background: #fff;
}
.work-blank.short {
  height: 123px;
}
.work-band {
  height: 28px;
  flex: none;
  background: #eeeeee;
  border-top: 1px solid #dcdcdc;
  border-bottom: 2px solid #a8a8a8;
}
.work-band.light {
  height: 26px;
  background: #f0f0f0;
  border-top: none;
  border-bottom: 1px solid #8a8a8a;
}
.filter-bar {
  height: 26px;
  flex: none;
  display: flex;
  align-items: flex-start;
  padding-top: 7px;
  background: linear-gradient(#eceef6, #d6dbea);
}
.filter-seg {
  display: flex;
  align-items: center;
  gap: 7px;
  height: 17px;
  padding: 0 5px;
  border-right: 1px solid #c4c8d4;
}
.filter-seg:first-child {
  width: 248px;
  gap: 4px;
}
.radio {
  width: 12px;
  height: 12px;
  margin-left: 4px;
  border-radius: 50%;
  background: #ddd;
  border: 1px solid #999;
  flex: none;
}
.radio.second {
  margin: 0 3px 0 13px;
}
.radio.on {
  background: radial-gradient(#1070b0 35%, #cfe0ee 40%);
}
.tabs {
  flex: 1;
  padding: 4px 0 0 8px;
  background: #8a8a8a;
}
.tab {
  display: block;
  width: 60px;
  height: 2px;
  background: #fff;
}

/* dialog, over the main window */
.dialog {
  position: absolute;
  left: 403px;
  top: 84px;
  width: 755px;
  height: 574px;
  padding: 0 5px 6px;
  display: flex;
  flex-direction: column;
  background: linear-gradient(#dce8f2, #b8d8f4 35%, #b4d4f0);
  border: 1px solid #3a4652;
  border-radius: 6px;
  box-shadow: 7px 7px 14px rgba(0, 0, 0, 0.6);
}
.dlg-title {
  height: 28px;
  flex: none;
  display: flex;
  justify-content: space-between;
  padding: 4px 1px 0 2px;
  background: linear-gradient(90deg, transparent 20%, rgba(90, 120, 150, 0.45) 30%, rgba(120, 150, 180, 0.3) 55%, rgba(90, 120, 150, 0.35) 80%, transparent 92%);
}
.dlg-close {
  display: flex;
  align-items: center;
  justify-content: center;
  width: 46px;
  height: 20px;
  margin-top: -4px;
  background: linear-gradient(#e8a090, #c04028 55%, #a02a18);
  border: 1px solid #6a3030;
  border-top: none;
  border-radius: 0 0 3px 3px;
}
.dlg-close svg {
  width: 10px;
  height: 10px;
}
.dlg-client {
  flex: 1;
  display: flex;
  flex-direction: column;
  background: #f0f0f0;
  border: 1px solid #5a6672;
  min-height: 0;
}
.dlg-body {
  display: flex;
  gap: 15px;
  padding: 0 8px;
}
.group {
  position: relative;
  border: 1px solid #dbe3ea;
  border-radius: 3px;
}
.legend {
  width: fit-content;
  height: 16px;
  margin: -8px 0 1px 6px;
  line-height: 16px;
  background: #f0f0f0;
}
.g-shapes {
  width: 479px;
  height: 467px;
  margin-top: 19px;
  padding-left: 3px;
}
.g-shapes .legend {
  margin-left: 2px;
}
.shapes {
  display: flex;
}
.cells {
  display: grid;
  grid-template-columns: repeat(3, 148px);
  grid-template-rows: 148px 149px 148px;
  gap: 4px;
  flex: none;
}
.cell {
  padding: 3px;
  background: #f0f0f0;
  border: 1px solid #fff;
  border-right-color: #a0a0a0;
  border-bottom-color: #a0a0a0;
}
.cell.selected {
  padding: 1px;
  border: 3px solid #ff0000;
}
.thumb-img, .preview-img {
  display: block;
  width: 140px;
  height: 140px;
  background: #7092aa;
}
.preview-img {
  width: 210px;
  height: 210px;
  margin-left: 12px;
}
.dlg-side {
  width: 232px;
  margin-top: 13px;
  display: flex;
  flex-direction: column;
}
.g-params {
  height: 233px;
  padding-left: 6px;
}
.g-params .legend {
  margin-left: 0;
}
.param-box {
  display: flex;
  width: 216px;
  height: 215px;
  padding: 1px;
  overflow: hidden;
  background: #f4f4f4;
  border: 1px solid #a8a8a8;
}
.g-preview {
  height: 225px;
  margin-top: 15px;
}
.g-preview .legend {
  margin-bottom: 0;
}
.dlg-foot {
  margin-top: auto;
  padding: 0 17px 13px 0;
  display: flex;
  justify-content: flex-end;
  gap: 32px;
}
.btn {
  width: 72px;
  height: 23px;
  text-align: center;
  line-height: 21px;
  background: linear-gradient(#f6f6f6, #f0f0f0 48%, #d8d8d8 50%, #cfcfcf);
  border: 1px solid #8a8a8a;
  border-radius: 3px;
}
.btn.default {
  background: linear-gradient(#e6f3fa, #d4e8f4 48%, #bcdcee 50%, #a8cfe6);
  border-color: #3c9ad0;
  box-shadow: inset 0 0 0 1px #9fdcf8;
}

/* thumbnails */
.tt {
  fill: #2c3684;
  font-family: "Noto Sans CJK SC", sans-serif;
  font-weight: 300;
}
.tt.soft {
  fill: #4a6090;
}
.lb {
  fill: #fff;
  font-family: "Liberation Serif", serif;
}
.lb.sans {
  font-family: "Liberation Sans", sans-serif;
  font-weight: bold;
}
.lb.cjk {
  font-family: "Liberation Serif", "Noto Sans CJK SC", serif;
}
.ln-y, .ln-g, .ln-p, .ln-p2, .hair {
  fill: none;
  stroke-width: 1;
}
.ln-y {
  stroke: #e4e43e;
}
.ln-y.thick {
  stroke-width: 1.400;
}
.ln-g {
  stroke: #a8c070;
}
.ln-p {
  stroke: #9cc8c0;
}
.ln-p2 {
  stroke: #d4e46c;
}
.hair {
  stroke: #1c1c1c;
  stroke-width: 0.600;
}
.dim {
  fill: none;
  stroke: #1c1c1c;
  stroke-width: 0.800;
}

/* red annotation frames drawn over the shot */
.mark {
  position: absolute;
  border-style: solid;
  border-color: #ff3838;
}
.mark-dialog {
  left: 397px;
  top: 80px;
  width: 757px;
  height: 530px;
  border-width: 7px;
}
.mark-title {
  left: 575px;
  top: 134px;
  width: 147px;
  height: 53px;
  border-width: 7px 7px 6px;
  background: linear-gradient(#fff 3px, transparent 3px);
}
```
